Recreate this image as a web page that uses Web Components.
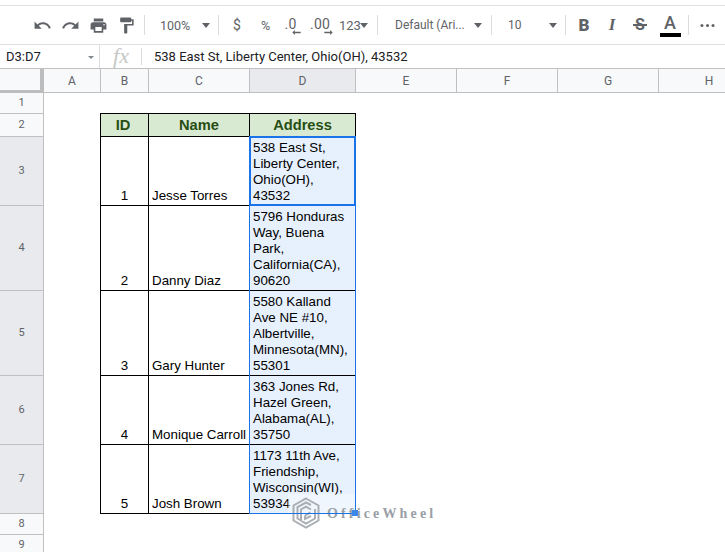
<!DOCTYPE html>
<html lang="en"><head><meta charset="utf-8"><title>Sheet</title>
<style>
html,body{margin:0;padding:0;background:#fff;overflow:hidden}
</style></head>
<body>
<gs-app>
  <gs-toolbar slot="toolbar">
    <gs-tool w="28" ml="28"><svg viewBox="0 0 24 24"><path d="M12.5 8c-2.65 0-5.05.99-6.9 2.6L2 7v9h9l-3.62-3.62c1.39-1.16 3.16-1.88 5.12-1.88 3.54 0 6.55 2.31 7.6 5.5l2.37-.78C21.08 11.03 17.15 8 12.5 8z"/></svg></gs-tool>
    <gs-tool w="28"><svg viewBox="0 0 24 24"><path d="M18.4 10.6C16.55 8.99 14.15 8 11.5 8c-4.65 0-8.58 3.03-9.96 7.22L3.9 16c1.05-3.19 4.05-5.5 7.6-5.5 1.95 0 3.73.72 5.12 1.88L13 16h9V7l-3.6 3.6z"/></svg></gs-tool>
    <gs-tool w="28"><svg viewBox="0 0 24 24"><path d="M19 8H5c-1.66 0-3 1.34-3 3v6h4v4h12v-4h4v-6c0-1.66-1.34-3-3-3zm-3 11H8v-5h8v5zm3-7c-.55 0-1-.45-1-1s.45-1 1-1 1 .45 1 1-.45 1-1 1zm-1-9H6v4h12V3z"/></svg></gs-tool>
    <gs-tool w="28"><svg viewBox="0 0 24 24"><path d="M18 4V3c0-.55-.45-1-1-1H5c-.55 0-1 .45-1 1v4c0 .55.45 1 1 1h12c.55 0 1-.45 1-1V6h1v4H9v11c0 .55.45 1 1 1h2c.55 0 1-.45 1-1v-9h8V4h-3z"/></svg></gs-tool>
    <gs-sep ml="4"></gs-sep>
    <gs-drop w="73" label="100%" pad="15" tw="42"></gs-drop>
    <gs-sep></gs-sep>
    <gs-tool w="36"><span class="t">$</span></gs-tool>
    <gs-tool w="21"><span class="t" style="font-size:12.5px">%</span></gs-tool>
    <gs-tool w="32"><gs-dec arrow="left" style="margin-right:3px">.0</gs-dec></gs-tool>
    <gs-tool w="24"><gs-dec arrow="right">.00</gs-dec></gs-tool>
    <gs-drop w="45" label="123" pad="7" tw="21"></gs-drop>
    <gs-sep></gs-sep>
    <gs-drop w="113" label="Default (Ari..." pad="17" tw="79"></gs-drop>
    <gs-sep></gs-sep>
    <gs-drop w="73" label="10" pad="16" tw="41"></gs-drop>
    <gs-sep></gs-sep>
    <gs-tool w="36"><span class="b">B</span></gs-tool>
    <gs-tool w="20"><span class="i">I</span></gs-tool>
    <gs-tool w="36"><span class="s">S</span></gs-tool>
    <gs-tool w="24"><span class="a">A</span></gs-tool>
    <gs-sep ml="6"></gs-sep>
    <gs-tool w="36"><svg viewBox="0 0 24 24"><circle cx="5" cy="12" r="1.9"/><circle cx="12" cy="12" r="1.9"/><circle cx="19" cy="12" r="1.9"/></svg></gs-tool>
  </gs-toolbar>
  <gs-formula slot="formula" name="D3:D7">538 East St, Liberty Center, Ohio(OH), 43532</gs-formula>
  <gs-sheet slot="sheet">
    <gs-cell k="corner" c="1" r="1"></gs-cell>
    <gs-cell k="ch" c="2" r="1">A</gs-cell>
    <gs-cell k="ch" c="3" r="1">B</gs-cell>
    <gs-cell k="ch" c="4" r="1">C</gs-cell>
    <gs-cell k="ch" sel c="5" r="1">D</gs-cell>
    <gs-cell k="ch" c="6" r="1">E</gs-cell>
    <gs-cell k="ch" c="7" r="1">F</gs-cell>
    <gs-cell k="ch" c="8" r="1">G</gs-cell>
    <gs-cell k="ch" c="9" r="1">H</gs-cell>

    <gs-cell k="rh" c="1" r="2">1</gs-cell>
    <gs-cell k="rh" c="1" r="3">2</gs-cell>
    <gs-cell k="rh" sel c="1" r="4">3</gs-cell>
    <gs-cell k="rh" sel c="1" r="5">4</gs-cell>
    <gs-cell k="rh" sel c="1" r="6">5</gs-cell>
    <gs-cell k="rh" sel c="1" r="7">6</gs-cell>
    <gs-cell k="rh" sel c="1" r="8">7</gs-cell>
    <gs-cell k="rh" c="1" r="9">8</gs-cell>
    <gs-cell k="rh" c="1" r="10">9</gs-cell>

    <gs-cell k="edge-b" c="2" r="2" style="margin-left:56px"></gs-cell>
    <gs-cell k="edge-b" c="3" r="2"></gs-cell>
    <gs-cell k="edge-b" c="4" r="2"></gs-cell>
    <gs-cell k="edge-b" c="5" r="2"></gs-cell>
    <gs-cell k="edge-r" c="2" r="3"></gs-cell>
    <gs-cell k="edge-r" c="2" r="4"></gs-cell>
    <gs-cell k="edge-r" c="2" r="5"></gs-cell>
    <gs-cell k="edge-r" c="2" r="6"></gs-cell>
    <gs-cell k="edge-r" c="2" r="7"></gs-cell>
    <gs-cell k="edge-r" c="2" r="8"></gs-cell>

    <gs-cell k="head" c="3" r="3" style="padding-right:3px">ID</gs-cell>
    <gs-cell k="head" c="4" r="3">Name</gs-cell>
    <gs-cell k="head" c="5" r="3">Address</gs-cell>

    <gs-cell k="num" c="3" r="4">1</gs-cell>
    <gs-cell k="txt" c="4" r="4">Jesse Torres</gs-cell>
    <gs-cell k="txt" sel c="5" r="4">538 East St,<br>Liberty Center,<br>Ohio(OH),<br>43532</gs-cell>

    <gs-cell k="num" c="3" r="5">2</gs-cell>
    <gs-cell k="txt" c="4" r="5">Danny Diaz</gs-cell>
    <gs-cell k="txt" sel c="5" r="5">5796 Honduras<br>Way, Buena<br>Park,<br>California(CA),<br>90620</gs-cell>

    <gs-cell k="num" c="3" r="6">3</gs-cell>
    <gs-cell k="txt" c="4" r="6">Gary Hunter</gs-cell>
    <gs-cell k="txt" sel c="5" r="6">5580 Kalland<br>Ave NE #10,<br>Albertville,<br>Minnesota(MN),<br>55301</gs-cell>

    <gs-cell k="num" c="3" r="7">4</gs-cell>
    <gs-cell k="txt" c="4" r="7">Monique Carroll</gs-cell>
    <gs-cell k="txt" sel c="5" r="7">363 Jones Rd,<br>Hazel Green,<br>Alabama(AL),<br>35750</gs-cell>

    <gs-cell k="num" c="3" r="8">5</gs-cell>
    <gs-cell k="txt" c="4" r="8">Josh Brown</gs-cell>
    <gs-cell k="txt" sel c="5" r="8">1173 11th Ave,<br>Friendship,<br>Wisconsin(WI),<br>53934</gs-cell>

    <gs-watermark slot="over">OfficeWheel</gs-watermark>
    <gs-selection slot="over"></gs-selection>
  </gs-sheet>
</gs-app>
<script>
const make=(name,css,html,extra)=>{
  customElements.define(name,class extends HTMLElement{
    constructor(){super();const r=this.attachShadow({mode:'open'});r.innerHTML='<style>'+css+'</style>'+html;}
    connectedCallback(){extra&&extra.call(this);}
  });
};
const GREY='#5f6368';
make('gs-app',`
  :host{display:grid;grid-template-rows:6px 39px 24px 1fr;width:725px;height:552px;overflow:hidden;background:#fff;font-family:"Liberation Sans",Arial,sans-serif}
  .top{border-bottom:1px solid #e0e0e0;box-sizing:border-box}
`,`<div class="top"></div><slot name="toolbar"></slot><slot name="formula"></slot><slot name="sheet"></slot>`);

make('gs-toolbar',`
  :host{display:flex;align-items:center;height:39px;box-sizing:border-box;border-bottom:1px solid #e0e0e0;overflow:hidden;color:${GREY};font-family:Roboto,"Liberation Sans",sans-serif;font-size:13px}
  ::slotted(*){flex:none}
`,`<slot></slot>`);

make('gs-tool',`
  :host{display:flex;align-items:center;justify-content:center;height:38px;width:var(--w);margin-left:var(--ml,0);position:relative}
  ::slotted(svg){width:19px;height:19px;fill:${GREY};display:block}
  ::slotted(.t){font:14px Roboto,sans-serif;color:${GREY}}
  ::slotted(.b){font:900 17px Roboto,sans-serif;color:${GREY}}
  ::slotted(.i){font:italic 700 17px "Liberation Serif",serif;color:${GREY}}
  ::slotted(.s){font:700 16px/18px Roboto,sans-serif;color:${GREY};padding:0 2.5px;background:linear-gradient(${GREY},${GREY}) center/100% 2px no-repeat}
  ::slotted(.a){display:block;font:500 18px Roboto,sans-serif;color:${GREY};width:21px;height:20px;text-align:center;line-height:19px;border-bottom:4px solid #000}
`,`<slot></slot>`,function(){
  this.style.setProperty('--w',this.getAttribute('w')+'px');
  if(this.hasAttribute('ml'))this.style.setProperty('--ml',this.getAttribute('ml')+'px');
});

make('gs-dec',`
  :host{display:block;position:relative;font:14px Roboto,sans-serif;color:${GREY};letter-spacing:.2px;line-height:16px;margin-top:-3px}
  svg{position:absolute;top:14px;width:9px;height:5px;fill:${GREY}}
  :host([arrow=left]) svg{right:-5px}
  :host([arrow=right]) svg{right:-3px}
`,`<slot></slot><svg viewBox="0 0 10 6"></svg>`,function(){
  const left=this.getAttribute('arrow')==='left';
  this.shadowRoot.querySelector('svg').innerHTML=left?'<path d="M0 3l3-3v2h7v2H3v2z"/>':'<path d="M10 3L7 0v2H0v2h7v2z"/>';
});

make('gs-sep',`
  :host{display:block;width:1px;height:20px;background:#dadce0;margin-left:var(--ml,0)}
`,``,function(){if(this.hasAttribute('ml'))this.style.setProperty('--ml',this.getAttribute('ml')+'px');});

make('gs-drop',`
  :host{display:flex;align-items:center;height:38px;width:var(--w);box-sizing:border-box;padding-left:var(--p);font:12px Roboto,sans-serif;color:${GREY};white-space:nowrap}
  i{display:block;flex:none;width:0;height:0;border:4.5px solid transparent;border-top:5px solid ${GREY};border-bottom:0;margin-top:1px}
  span{display:block;flex:none;width:var(--t)}
`,`<span></span><i></i>`,function(){
  this.style.setProperty('--w',this.getAttribute('w')+'px');
  this.style.setProperty('--p',this.getAttribute('pad')+'px');
  this.style.setProperty('--t',this.getAttribute('tw')+'px');
  const s=this.shadowRoot.querySelector('span');
  const l=this.getAttribute('label');
  s.textContent=l;
  if(l==='123')s.style.font='13px Roboto,sans-serif';
  if(l==='100%')s.style.font='12.5px Roboto,sans-serif';
});

make('gs-formula',`
  :host{display:flex;align-items:center;height:24px;box-sizing:border-box;border-bottom:1px solid #c0c0c0;font-family:Roboto,"Liberation Sans",sans-serif;font-size:13px;color:#202124}
  .name{width:100px;box-sizing:border-box;padding-left:6px;display:flex;align-items:center;height:100%;border-right:1px solid #dadce0;position:relative;color:#202124}
  .name i{position:absolute;left:88px;top:11px;width:0;height:0;border:3px solid transparent;border-top:3.5px solid #80868b;border-bottom:0}
  .fx{width:41px;text-align:center;font:italic 22px "Liberation Serif",serif;color:#c4c7c5;line-height:22px;margin-top:-2px;padding-left:1px;box-sizing:border-box}
  .sep{width:1px;height:17px;background:#dadce0}
  .val{padding-left:12px;white-space:nowrap}
`,`<div class="name"><span></span><i></i></div><div class="fx">fx</div><div class="sep"></div><div class="val"><slot></slot></div>`,function(){
  this.shadowRoot.querySelector('.name span').textContent=this.getAttribute('name');
});

make('gs-sheet',`
  :host{display:grid;position:relative;overflow:hidden;
    grid-template-columns:44px 57px 48px 101px 106px 101px 101px 101px 101px;
    grid-template-rows:24px 21px 23px 69px 85px 85px 69px 69px 21px 21px;
    height:483px;background:#fff}
`,`<slot></slot><slot name="over"></slot>`);

make('gs-cell',`
  :host{display:flex;box-sizing:border-box;min-width:0;min-height:0;overflow:hidden;color:#000;font:13.333px/16px "Liberation Sans",Arial,sans-serif}
  .c{white-space:nowrap;width:100%}
  :host([k=corner]){background:#f8f9fa;border-right:4px solid #bdbdbd;border-bottom:3px solid #bdbdbd}
  :host([k=ch]){background:#f8f9fa;border-right:1px solid #c0c0c0;border-bottom:1px solid #c0c0c0;align-items:center;text-align:center;color:${GREY};font:12px Roboto,sans-serif}
  :host([k=rh]){background:#f8f9fa;border-right:1px solid #c0c0c0;border-bottom:1px solid #c0c0c0;padding-bottom:1px;align-items:center;text-align:center;color:${GREY};font:11px Roboto,sans-serif}
  :host([k=ch][sel]),:host([k=rh][sel]){background:#e8eaed}
  :host([k=edge-b]){border-bottom:1px solid #000}
  :host([k=edge-r]){border-right:1px solid #000}
  :host([k=head]){background:#d9ead3;color:#274e13;font:700 14.667px/17px "Liberation Sans",Arial,sans-serif;text-align:center;align-items:flex-end;padding-bottom:2px;border-right:1px solid #000;border-bottom:1px solid #000}
  :host([k=num]){text-align:center;align-items:flex-end;padding-bottom:1px;border-right:1px solid #000;border-bottom:1px solid #000}
  :host([k=txt]){padding:0 0 1px 3px;align-items:flex-end;border-right:1px solid #000;border-bottom:1px solid #000}
  :host([k=txt][sel]){background:#e7f0fd}
`,`<div class="c"><slot></slot></div>`,function(){
  this.style.gridColumn=this.getAttribute('c');
  this.style.gridRow=this.getAttribute('r');
});

make('gs-selection',`
  :host{position:absolute;left:249px;top:67px;width:107px;height:378px;box-sizing:border-box;border:1px solid #1a73e8;pointer-events:none}
  .active{position:absolute;left:-1px;top:-1px;width:107px;height:70px;box-sizing:border-box;border:2px solid #1a73e8}
  .handle{position:absolute;right:-3px;bottom:-3px;width:6px;height:6px;background:#3d86ea}
`,`<div class="active"></div><div class="handle"></div>`);

make('gs-watermark',`
  :host{position:absolute;left:288px;top:425px;width:152px;height:37px;display:flex;align-items:center;background:rgba(255,255,255,.38);color:#9aa0a6;font:700 14px "Liberation Serif",serif;letter-spacing:3.15px;white-space:nowrap}
  svg{width:30px;height:32px;margin-left:3px;margin-right:6px;flex:none;opacity:.9}
  span{padding-top:2px}
`,`<svg viewBox="0 0 30 32" fill="none" stroke="#a3a8ae" stroke-width="2"><path d="M15 1.5 27.5 8.5V23.5L15 30.5 2.5 23.5V8.5Z"/><path d="M20 8 15 5.500 6.500 10.200V21.500L10 23.500V12.500L15 9.700 20 12.500"/><path d="M24 12V21.500L15 26.500 11 24.300"/><path d="M14 18.500 19.500 15.500M14 18.500V22L20 19"/></svg><span><slot></slot></span>`);
</script>
</body></html>
